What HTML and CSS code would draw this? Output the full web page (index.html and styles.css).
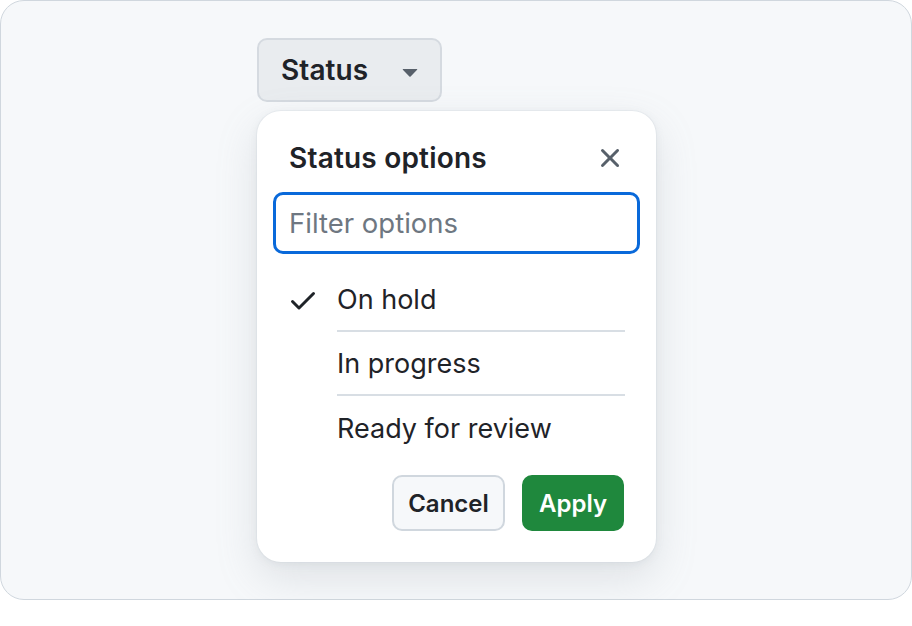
FILE: index.html
```html
<!DOCTYPE html>
<html>
<head>
<meta charset="utf-8">
<link rel="stylesheet" href="styles.css">
</head>
<body>
<div class="frame">
  <button class="status-btn">
    <span>Status</span>
    <svg class="caret" width="32" height="32" viewBox="0 0 16 16"><path fill="#57606a" d="m4.427 7.427 3.396 3.396a.25.25 0 0 0 .354 0l3.396-3.396A.25.25 0 0 0 11.396 7H4.604a.25.25 0 0 0-.177.427Z"/></svg>
  </button>
  <div class="popup">
    <div class="header">
      <h2 class="title">Status options</h2>
      <svg class="close" width="32" height="32" viewBox="0 0 16 16"><path fill="#57606a" d="M3.72 3.72a.75.75 0 0 1 1.06 0L8 6.94l3.22-3.22a.749.749 0 0 1 1.275.326.749.749 0 0 1-.215.734L9.06 8l3.22 3.22a.749.749 0 0 1-.326 1.275.749.749 0 0 1-.734-.215L8 9.06l-3.22 3.220a.751.751 0 0 1-1.042-.018.751.751 0 0 1-.018-1.042L6.94 8 3.72 4.78a.75.75 0 0 1 0-1.06Z"/></svg>
    </div>
    <div class="filter">Filter options</div>
    <ul class="list">
      <li class="item">
        <span class="check"><svg width="32" height="32" viewBox="0 0 16 16"><path fill="#1f2328" d="M13.78 4.22a.75.75 0 0 1 0 1.06l-7.25 7.25a.75.75 0 0 1-1.06 0L2.22 9.28a.751.751 0 0 1 .018-1.042.751.751 0 0 1 1.042-.018L6 10.94l6.72-6.72a.75.75 0 0 1 1.06 0Z"/></svg></span>
        <span class="label sep">On hold</span>
      </li>
      <li class="item">
        <span class="check"></span>
        <span class="label sep">In progress</span>
      </li>
      <li class="item">
        <span class="check"></span>
        <span class="label">Ready for review</span>
      </li>
    </ul>
    <div class="footer">
      <button class="btn cancel">Cancel</button>
      <button class="btn apply">Apply</button>
    </div>
  </div>
</div>
</body>
</html>
```
FILE: styles.css
```css
* { box-sizing: border-box; }
body {
  margin: 0;
  background: #ffffff;
  font-family: Inter, "Noto Sans", sans-serif;
  color: #1f2328;
}
.frame {
  width: 912px;
  height: 600px;
  background: #f6f8fa;
  border: 1px solid #d0d7de;
  border-radius: 24px;
  padding: 37px 0 0 256px;
  display: flex;
  flex-direction: column;
  align-items: flex-start;
}
.status-btn {
  display: flex;
  align-items: center;
  justify-content: space-between;
  width: 185px;
  height: 64px;
  padding: 0 14px 0 22px;
  background: #e9ecef;
  border: 2px solid #d5dae0;
  border-radius: 10px;
  font-family: inherit;
  font-size: 28px;
  font-weight: 600;
  letter-spacing: 0.1px;
  color: #1f2328;
}
.caret { margin-top: 2px; }
.popup {
  margin-top: 9px;
  width: 399px;
  height: 451px;
  background: #ffffff;
  border-radius: 24px;
  box-shadow: 0 0 0 1px rgba(208,215,222,0.3), 0 16px 40px rgba(140,149,159,0.22), 0 2px 8px rgba(140,149,159,0.12);
  padding: 31px 16px 31px;
  display: flex;
  flex-direction: column;
}
.header {
  display: flex;
  align-items: center;
  justify-content: space-between;
  height: 32px;
  padding: 0 14px 0 16px;
}
.title {
  margin: 0;
  font-size: 28px;
  font-weight: 600;
  letter-spacing: 0.2px;
}
.filter {
  margin-top: 18px;
  height: 62px;
  border: 3px solid #0969da;
  border-radius: 10px;
  padding: 0 13px;
  display: flex;
  align-items: center;
  font-size: 27.5px;
  color: #6e7781;
}
.list {
  list-style: none;
  margin: 14px 0 0;
  padding: 0;
}
.item {
  display: flex;
  height: 64px;
  padding: 0 15px 0 14px;
}
.check {
  width: 50px;
  display: flex;
  align-items: center;
}
.label {
  flex: 1;
  display: flex;
  align-items: center;
  font-size: 27px;
  color: #1f2328;
}
.sep { border-bottom: 2px solid #d8dee4; }
.footer {
  margin-top: 15px;
  display: flex;
  justify-content: flex-end;
  gap: 17px;
  padding-right: 16px;
}
.btn {
  height: 56px;
  border-radius: 10px;
  font-family: inherit;
  font-size: 24px;
  font-weight: 600;
  padding: 0 14px;
}
.cancel {
  width: 113px;
  background: #f6f8fa;
  border: 2px solid #d0d7de;
  color: #1f2328;
}
.apply {
  width: 102px;
  background: #1f883d;
  border: 2px solid #1f883d;
  color: #ffffff;
}
```
